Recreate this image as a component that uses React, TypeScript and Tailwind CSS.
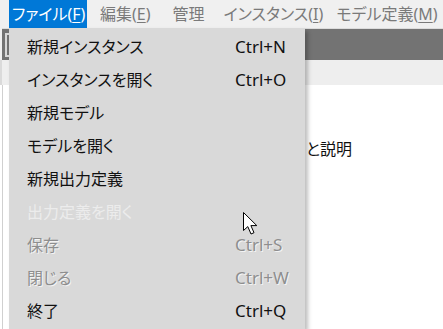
import React from "react";

const font = { fontFamily: '"Noto Sans", "Noto Sans CJK JP", sans-serif' };

type Item = { label: string; shortcut?: string; state: "normal" | "disabled" | "faint" };

const items: Item[] = [
  { label: "新規インスタンス", shortcut: "Ctrl+N", state: "normal" },
  { label: "インスタンスを開く", shortcut: "Ctrl+O", state: "normal" },
  { label: "新規モデル", state: "normal" },
  { label: "モデルを開く", state: "normal" },
  { label: "新規出力定義", state: "normal" },
  { label: "出力定義を開く", state: "faint" },
  { label: "保存", shortcut: "Ctrl+S", state: "disabled" },
  { label: "閉じる", shortcut: "Ctrl+W", state: "disabled" },
  { label: "終了", shortcut: "Ctrl+Q", state: "normal" },
];

function MenuLabel({ text, acc }: { text: string; acc?: string }) {
  return (
    <span>
      {text}
      {acc && (
        <>
          (<span className="underline underline-offset-2">{acc}</span>)
        </>
      )}
    </span>
  );
}

export default function App() {
  return (
    <div
      className="relative w-[443px] h-[329px] overflow-hidden bg-white text-[16px] [font-feature-settings:'palt']"
      style={font}
    >
      {/* menu bar */}
      <div className="flex h-[28px] items-stretch bg-[#f0f0f0] pl-[9px] text-[#7a7a7a] whitespace-nowrap">
        <div className="flex items-center bg-[#0078d7] px-[3px] text-white w-[78px]">
          <MenuLabel text="ファイル" acc="F" />
        </div>
        <div className="flex items-center pl-[13px]">
          <MenuLabel text="編集" acc="E" />
        </div>
        <div className="flex items-center pl-[22px]">管理</div>
        <div className="flex items-center pl-[19px]">
          <MenuLabel text="インスタンス" acc="I" />
        </div>
        <div className="flex items-center pl-[13px]">
          <MenuLabel text="モデル定義" acc="M" />
        </div>
      </div>

      {/* toolbar */}
      <div className="flex h-[32px]">
        <div className="w-[2px] bg-[#f0f0f0]" />
        <div className="flex-1 border-t border-[#dcdcdc] bg-[#737373] flex items-center">
          <div className="ml-[3px] h-[24px] w-[5px] border-l-2 border-y-2 border-[#d8d8d8]" />
        </div>
      </div>
      <div className="flex h-[25px]">
        <div className="w-[2px] bg-[#dadada]" />
        <div className="flex-1 bg-[#eeeeee]" />
      </div>
      <div className="flex h-[244px]">
        <div className="w-[3px] border-r border-[#d0d0d0] bg-white" />
        <div className="relative flex-1 bg-white text-[#111]">
          <div className="absolute left-[303px] top-[52px]">と説明</div>
          <div className="absolute left-[30px] top-[234px] flex gap-[112px]">
            <span>ト</span>
            <span>は入れくだ</span>
          </div>
        </div>
      </div>

      {/* dropdown menu */}
      <div className="absolute left-[9px] top-[28px] w-[296px] bg-[#d9d9d9] pt-[2px] pb-[2px] shadow-[3px_3px_4px_rgba(0,0,0,0.25)]">
        {items.map((it) => {
          const color =
            it.state === "normal"
              ? "text-[#111111]"
              : it.state === "faint"
              ? "text-[#ececec]"
              : "text-[#8e8e8e] [text-shadow:1px_1px_0_#f4f4f4]";
          return (
            <div key={it.label} className={`flex h-[33px] items-center ${color}`}>
              <span className="pl-[18px] w-[226px] whitespace-nowrap">{it.label}</span>
              {it.shortcut && <span className="text-[17px]">{it.shortcut}</span>}
            </div>
          );
        })}
      </div>

      {/* mouse cursor */}
      <svg
        className="absolute left-[242px] top-[211px]"
        width="18"
        height="26"
        viewBox="0 0 18 26"
      >
        <path
          d="M1.5 1.5 L1.5 19.5 L5.8 15.6 L9 23 L12 21.7 L8.9 14.6 L14.8 14.6 Z"
          fill="#ffffff"
          stroke="#000000"
          strokeWidth="1"
          strokeLinejoin="miter"
        />
      </svg>
    </div>
  );
}
